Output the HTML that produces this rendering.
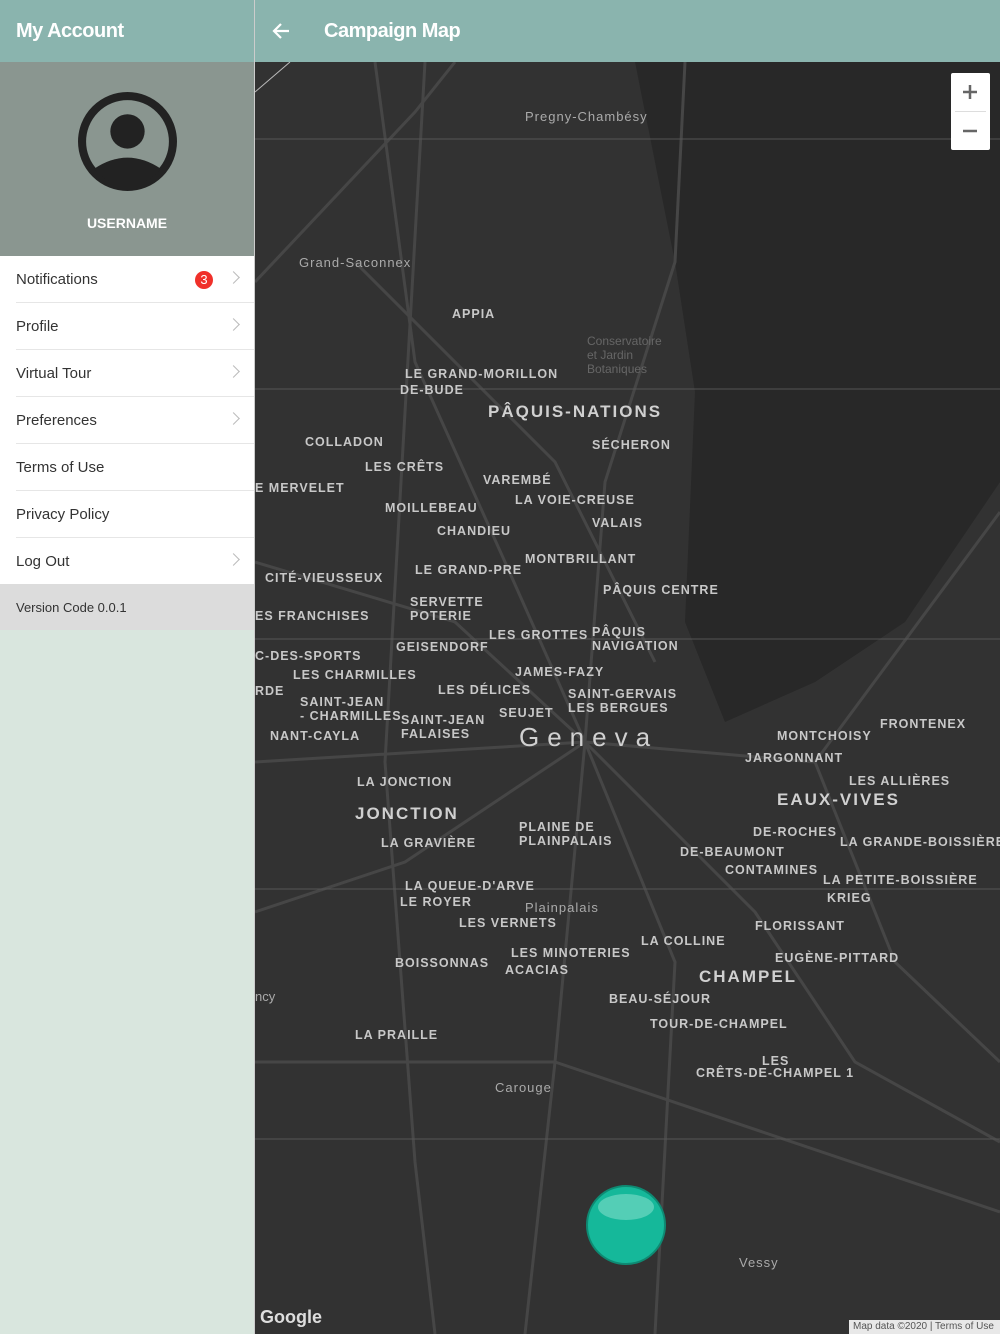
<!DOCTYPE html>
<html><head><meta charset="utf-8"><style>
*{margin:0;padding:0;box-sizing:border-box}
body{width:1000px;height:1334px;overflow:hidden;font-family:"Liberation Sans",sans-serif;background:#dbe7df;position:relative}
.side{position:absolute;left:0;top:0;width:254px;height:1334px;background:#d9e6de}
.hdr{position:absolute;top:0;height:62px;background:#8ab4ae;color:#fff;font-weight:bold;font-size:20px;letter-spacing:-0.5px}
.prof{position:absolute;left:0;top:62px;width:254px;height:194px;background:#8a9690}
.item{position:absolute;left:0;width:254px;height:47px;background:#fff;font-size:15px;color:#333;padding:15px 0 0 16px}
.item:after{content:"";position:absolute;left:16px;right:0;bottom:0;height:1px;background:#e6e6e6}
.chev{position:absolute;right:16px;top:17px;width:9px;height:9px;border-right:1.5px solid #bbb;border-top:1.5px solid #bbb;transform:rotate(45deg)}
.map{position:absolute;left:255px;top:62px;width:745px;height:1272px;background:#323232;overflow:hidden}
.map .l{position:absolute;color:#c8c8c8;font-size:12.5px;letter-spacing:1px;font-weight:bold;white-space:nowrap}
.map .s{position:absolute;color:#888;font-size:12px;white-space:nowrap}
.map .b{position:absolute;color:#d0d0d0;font-size:17px;letter-spacing:2px;font-weight:bold;white-space:nowrap}
</style></head><body>
<div class="side">
<div class="hdr" style="left:0;width:254px;padding:20px 0 0 16px">My Account</div>
<div class="prof">
<svg style="position:absolute;left:77px;top:29px" width="101" height="101" viewBox="0 0 100 100"><circle cx="50" cy="50" r="45" fill="none" stroke="#222" stroke-width="8"/><circle cx="50" cy="40" r="17" fill="#222"/><path d="M17 77 Q50 55 83 77 Q70 93 50 93 Q30 93 17 77Z" fill="#222"/></svg>
<div style="position:absolute;top:153px;width:254px;text-align:center;color:#fff;font-weight:bold;font-size:14px">USERNAME</div>
</div>
<div class="item" style="top:256px">Notifications<span style="position:absolute;left:195px;top:15px;width:18px;height:18px;border-radius:9px;background:#f0302a;color:#fff;font-size:13px;text-align:center;line-height:18px">3</span><span class="chev"></span></div>
<div class="item" style="top:303px">Profile<span class="chev"></span></div>
<div class="item" style="top:350px">Virtual Tour<span class="chev"></span></div>
<div class="item" style="top:397px">Preferences<span class="chev"></span></div>
<div class="item" style="top:444px">Terms of Use</div>
<div class="item" style="top:491px">Privacy Policy</div>
<div class="item" style="top:538px">Log Out<span class="chev"></span></div>
<div style="position:absolute;top:584px;left:0;width:254px;height:46px;background:#dcdcdc;font-size:13px;color:#333;padding:16px 0 0 16px">Version Code 0.0.1</div>
</div>
<div class="hdr" style="left:255px;width:745px;padding:20px 0 0 69px">Campaign Map
<svg style="position:absolute;left:17px;top:22px" width="18" height="18" viewBox="0 0 18 18"><path d="M17 9H3M9 2L2 9l7 7" stroke="#fff" stroke-width="2.2" fill="none"/></svg></div>
<div style="position:absolute;left:254px;top:0;width:1px;height:1334px;background:#ccc"></div>
<div class="map">
<svg width="745" height="1272" style="position:absolute;left:0;top:0">
<path d="M380 0 L745 0 L745 420 L650 560 L560 620 L470 660 L430 560 L440 330 L420 200 Z" fill="#282828"/>
<g stroke="#464646" stroke-width="3" fill="none">
<path d="M0 220 L160 50 L200 0"/><path d="M120 0 L160 300 L250 500 L330 680"/><path d="M430 0 L420 200 L350 420 L330 680"/><path d="M0 500 L200 560 L330 680 L560 700 L745 450"/><path d="M330 680 L300 1000 L270 1272"/><path d="M330 680 L500 850 L600 1000 L745 1080"/><path d="M330 680 L150 800 L0 850"/><path d="M100 200 L300 400 L400 600"/><path d="M0 700 L330 680"/><path d="M330 680 L420 900 L400 1272"/><path d="M170 0 L130 700 L160 1100 L180 1272"/><path d="M560 700 L640 900 L745 1000"/><path d="M0 1000 L300 1000 L745 1150"/>
</g>
<g stroke="#555" stroke-width="1"><path d="M0 77H745M0 327H745M0 577H745M0 827H745M0 1077H745"/><path d="M0 30L35 0" stroke="#bbb"/></g>
<rect x="696" y="11" width="39" height="77" fill="#fff" rx="2"/><path d="M700 49.5H731" stroke="#ddd"/>
<path d="M708 30H722M715 23V37M708 69H722" stroke="#666" stroke-width="2.5"/>
<circle cx="371" cy="1163" r="39" fill="#15b89a" stroke="#0e8a73" stroke-width="2"/><ellipse cx="371" cy="1145" rx="28" ry="13" fill="#7fdcc9" opacity=".6"/>
<rect x="594" y="1258" width="151" height="14" fill="#e8e8e8"/>
</svg>
<span class="s" style="left:598px;top:1259px;font-size:10px;color:#555">Map data ©2020 | Terms of Use</span>
<span class="s" style="left:5px;top:1245px;font-size:18px;color:#ddd;font-weight:bold">Google</span>
<span class="s" style="left:270px;top:47px;font-size:13px;color:#aaa;letter-spacing:1px">Pregny-Chambésy</span>
<span class="s" style="left:44px;top:193px;font-size:13px;color:#aaa;letter-spacing:1px">Grand-Saconnex</span>
<span class="s" style="left:332px;top:272px;color:#666">Conservatoire<br>et Jardin<br>Botaniques</span>
<span class="l" style="left:197px;top:245px">APPIA</span>
<span class="l" style="left:150px;top:305px">LE GRAND-MORILLON</span>
<span class="l" style="left:145px;top:321px">DE-BUDE</span>
<span class="b" style="left:233px;top:340px">PÂQUIS-NATIONS</span>
<span class="l" style="left:337px;top:376px">SÉCHERON</span>
<span class="l" style="left:50px;top:373px">COLLADON</span>
<span class="l" style="left:110px;top:398px">LES CRÊTS</span>
<span class="l" style="left:0;top:419px">E MERVELET</span>
<span class="l" style="left:228px;top:411px">VAREMBÉ</span>
<span class="l" style="left:260px;top:431px">LA VOIE-CREUSE</span>
<span class="l" style="left:130px;top:439px">MOILLEBEAU</span>
<span class="l" style="left:337px;top:454px">VALAIS</span>
<span class="l" style="left:182px;top:462px">CHANDIEU</span>
<span class="l" style="left:270px;top:490px">MONTBRILLANT</span>
<span class="l" style="left:160px;top:501px">LE GRAND-PRE</span>
<span class="l" style="left:10px;top:509px">CITÉ-VIEUSSEUX</span>
<span class="l" style="left:348px;top:521px">PÂQUIS CENTRE</span>
<span class="l" style="left:155px;top:533px">SERVETTE<br>POTERIE</span>
<span class="l" style="left:0;top:547px">ES FRANCHISES</span>
<span class="l" style="left:234px;top:566px">LES GROTTES</span>
<span class="l" style="left:337px;top:563px">PÂQUIS<br>NAVIGATION</span>
<span class="l" style="left:141px;top:578px">GEISENDORF</span>
<span class="l" style="left:0;top:587px">C-DES-SPORTS</span>
<span class="l" style="left:38px;top:606px">LES CHARMILLES</span>
<span class="l" style="left:260px;top:603px">JAMES-FAZY</span>
<span class="l" style="left:183px;top:621px">LES DÉLICES</span>
<span class="l" style="left:313px;top:625px">SAINT-GERVAIS<br>LES BERGUES</span>
<span class="l" style="left:0;top:622px">RDE</span>
<span class="l" style="left:45px;top:633px">SAINT-JEAN<br>- CHARMILLES</span>
<span class="l" style="left:146px;top:651px">SAINT-JEAN<br>FALAISES</span>
<span class="l" style="left:244px;top:644px">SEUJET</span>
<span class="l" style="left:15px;top:667px">NANT-CAYLA</span>
<span class="b" style="left:264px;top:660px;font-size:26px;letter-spacing:8px;font-weight:normal">Geneva</span>
<span class="l" style="left:625px;top:655px">FRONTENEX</span>
<span class="l" style="left:522px;top:667px">MONTCHOISY</span>
<span class="l" style="left:490px;top:689px">JARGONNANT</span>
<span class="l" style="left:102px;top:713px">LA JONCTION</span>
<span class="l" style="left:594px;top:712px">LES ALLIÈRES</span>
<span class="b" style="left:522px;top:728px">EAUX-VIVES</span>
<span class="b" style="left:100px;top:742px">JONCTION</span>
<span class="l" style="left:264px;top:758px">PLAINE DE<br>PLAINPALAIS</span>
<span class="l" style="left:126px;top:774px">LA GRAVIÈRE</span>
<span class="l" style="left:498px;top:763px">DE-ROCHES</span>
<span class="l" style="left:585px;top:773px">LA GRANDE-BOISSIÈRE</span>
<span class="l" style="left:425px;top:783px">DE-BEAUMONT</span>
<span class="l" style="left:470px;top:801px">CONTAMINES</span>
<span class="l" style="left:568px;top:811px">LA PETITE-BOISSIÈRE</span>
<span class="l" style="left:150px;top:817px">LA QUEUE-D'ARVE</span>
<span class="l" style="left:145px;top:833px">LE ROYER</span>
<span class="s" style="left:270px;top:838px;font-size:13px;color:#aaa;letter-spacing:1px">Plainpalais</span>
<span class="l" style="left:572px;top:829px">KRIEG</span>
<span class="l" style="left:204px;top:854px">LES VERNETS</span>
<span class="l" style="left:500px;top:857px">FLORISSANT</span>
<span class="l" style="left:386px;top:872px">LA COLLINE</span>
<span class="l" style="left:256px;top:884px">LES MINOTERIES</span>
<span class="l" style="left:140px;top:894px">BOISSONNAS</span>
<span class="l" style="left:520px;top:889px">EUGÈNE-PITTARD</span>
<span class="l" style="left:250px;top:901px">ACACIAS</span>
<span class="b" style="left:444px;top:905px">CHAMPEL</span>
<span class="l" style="left:354px;top:930px">BEAU-SÉJOUR</span>
<span class="l" style="left:395px;top:955px">TOUR-DE-CHAMPEL</span>
<span class="l" style="left:100px;top:966px">LA PRAILLE</span>
<span class="l" style="left:507px;top:992px">LES</span>
<span class="l" style="left:441px;top:1004px">CRÊTS-DE-CHAMPEL 1</span>
<span class="s" style="left:240px;top:1018px;font-size:13px;color:#aaa;letter-spacing:1px">Carouge</span>
<span class="s" style="left:484px;top:1193px;font-size:13px;color:#aaa;letter-spacing:1px">Vessy</span>
<span class="s" style="left:0;top:927px;font-size:13px;color:#aaa">ncy</span>
</div>
</body></html>
